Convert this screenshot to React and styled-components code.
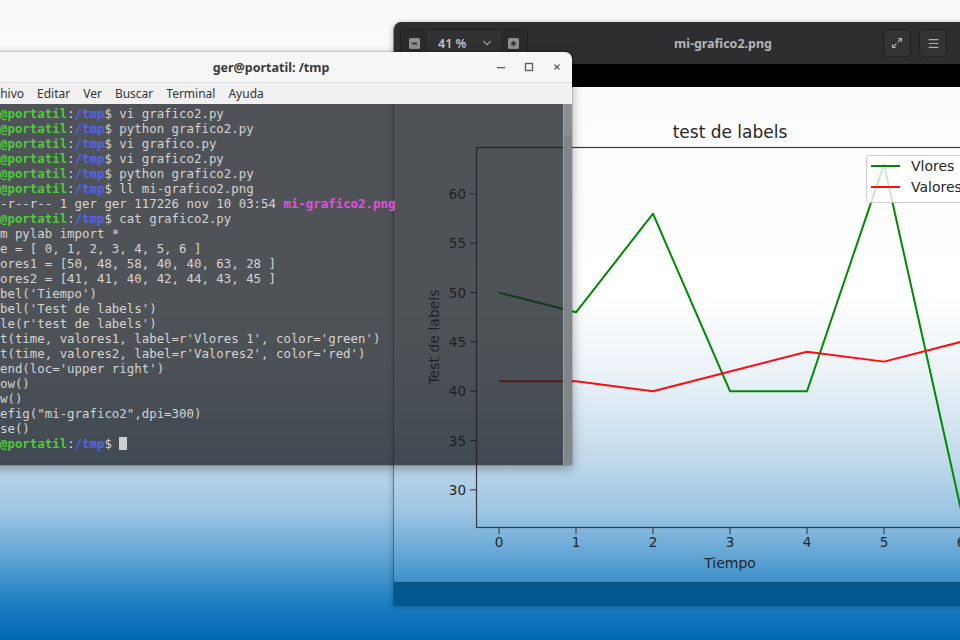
import React from 'react'
import styled, { createGlobalStyle } from 'styled-components'
import { ChevronDown, Maximize2, Menu } from 'lucide-react'

const GlobalStyle = createGlobalStyle`
  html, body {
    margin: 0;
    padding: 0;
  }
  body {
    width: 960px;
    height: 640px;
    overflow: hidden;
    font-family: "Noto Sans", "DejaVu Sans", sans-serif;
  }
`

const Desktop = styled.div`
  position: relative;
  width: 960px;
  height: 640px;
  overflow: hidden;
  background: linear-gradient(
    to bottom,
    #fafafa 0%,
    #ffffff 46%,
    #e9f2f8 59%,
    #c4dbec 71%,
    #9cc5e3 80%,
    #5ca2d3 87.5%,
    #1f7fc2 94%,
    #0068b3 100%
  );
`

/* ---------- image viewer window ---------- */

const Viewer = styled.div`
  position: absolute;
  left: 393px;
  top: 22px;
  width: 658px;
  height: 584px;
  display: flex;
  flex-direction: column;
  border-left: 1px solid rgba(30, 50, 70, 0.55);
  border-radius: 8px 8px 0 0;
  overflow: hidden;
  box-shadow: 0 1px 6px rgba(0, 0, 0, 0.25);
`

const ViewerHeader = styled.header`
  height: 42px;
  flex-shrink: 0;
  background: #2c2e30;
  display: grid;
  grid-template-columns: 1fr auto 1fr;
  align-items: center;
  padding: 0 6px;
  box-sizing: border-box;
`

const ZoomGroup = styled.div`
  justify-self: start;
  display: flex;
  align-items: center;
  height: 26px;
  border: 1px solid #1f2022;
  border-radius: 4px;
  background: #2f3133;
  overflow: hidden;
`

const ZoomButton = styled.div`
  width: 26px;
  height: 26px;
  display: flex;
  align-items: center;
  justify-content: center;
  background: #292b2d;
`

const ZoomValue = styled.div`
  display: flex;
  align-items: center;
  gap: 13px;
  padding: 0 7px 0 11px;
  color: #c4c4c4;
  font-size: 12.5px;
  font-weight: 600;

  svg {
    color: #9a9a9a;
  }
`

const ViewerTitle = styled.div`
  color: #b4b4b4;
  font-size: 12.5px;
  font-weight: 700;
`

const HeaderTools = styled.div`
  justify-self: start;
  display: flex;
  gap: 8px;
  padding-left: 111px;
`

const ToolButton = styled.div`
  width: 26px;
  height: 26px;
  display: flex;
  align-items: center;
  justify-content: center;
  border: 1px solid #1f2022;
  border-radius: 4px;
  background: #313335;
  color: #b0b0b0;
`

const BlackStrip = styled.div`
  height: 23px;
  flex-shrink: 0;
  background: #000;
`

const ViewerCanvas = styled.div`
  height: 495px;
  flex-shrink: 0;
`

const ViewerFooter = styled.div`
  height: 24px;
  flex-shrink: 0;
  background: #00588f;
  border-top: 1px solid #0a4f7c;
`

/* ---------- terminal window ---------- */

const Terminal = styled.div`
  position: absolute;
  left: -30px;
  top: 52px;
  width: 602px;
  height: 413px;
  display: flex;
  flex-direction: column;
  border-radius: 7px 7px 0 0;
  overflow: hidden;
  box-shadow: 0 3px 12px rgba(0, 0, 0, 0.35), 0 0 0 1px rgba(0, 0, 0, 0.12);
`

const TitleBar = styled.div`
  position: relative;
  height: 31px;
  flex-shrink: 0;
  display: flex;
  align-items: center;
  justify-content: center;
  background: #f6f6f6;
  border-bottom: 1px solid #dedede;
  box-sizing: border-box;
  color: #3c3c3c;
  font-size: 12.5px;
  font-weight: 700;
`

const WindowButtons = styled.div`
  position: absolute;
  right: 1px;
  top: 0;
  bottom: 0;
  display: flex;
  align-items: center;
`

const WindowButton = styled.div`
  width: 28px;
  display: flex;
  justify-content: center;
  color: #5b5b5b;
`

const MenuBar = styled.nav`
  height: 21px;
  flex-shrink: 0;
  display: flex;
  align-items: center;
  gap: 13px;
  padding-left: 12px;
  background: #f1f1f1;
  color: #333;
  font-size: 12px;
`

const TermBody = styled.div`
  flex: 1;
  display: flex;
  min-height: 0;
  background: rgba(26, 31, 36, 0.77);
`

const TermText = styled.pre`
  flex: 1;
  margin: 0;
  padding: 2px 0 0 7.6px;
  overflow: hidden;
  font-family: "DejaVu Sans Mono", "Liberation Mono", monospace;
  font-size: 12.4px;
  line-height: 15px;
  color: #d4d4d4;
`

const Host = styled.span`
  color: #4ecb3c;
  font-weight: 700;
`

const Dir = styled.span`
  color: #5463f0;
  font-weight: 700;
`

const Exec = styled.span`
  color: #e34fe0;
  font-weight: 700;
`

const Cursor = styled.span`
  display: inline-block;
  width: 8px;
  height: 13px;
  vertical-align: -2px;
  background: #cfcfcf;
`

const ScrollTrack = styled.div`
  width: 9px;
  flex-shrink: 0;
  display: flex;
  justify-content: center;
  padding: 31px 0 5px;
  box-sizing: border-box;
  background: rgba(215, 218, 220, 0.45);
  border-left: 1px solid rgba(255, 255, 255, 0.18);
`

const ScrollThumb = styled.div`
  flex: 1;
  width: 5px;
  border-radius: 3px;
  background: #7f8589;
`

/* ---------- data ---------- */

const prompts = [
  'vi grafico2.py',
  'python grafico2.py',
  'vi grafico.py',
  'vi grafico2.py',
  'python grafico2.py',
  'll mi-grafico2.png',
]

const source = [
  'from pylab import *',
  'time = [ 0, 1, 2, 3, 4, 5, 6 ]',
  'valores1 = [50, 48, 58, 40, 40, 63, 28 ]',
  'valores2 = [41, 41, 40, 42, 44, 43, 45 ]',
  "xlabel('Tiempo')",
  "ylabel('Test de labels')",
  "title(r'test de labels')",
  "plot(time, valores1, label=r'Vlores 1', color='green')",
  "plot(time, valores2, label=r'Valores2', color='red')",
  "legend(loc='upper right')",
  '#show()',
  'draw()',
  'savefig("mi-grafico2",dpi=300)',
  'close()',
]

const valores1 = [50, 48, 58, 40, 40, 63, 28]
const valores2 = [41, 41, 40, 42, 44, 43, 45]

const px = i => 499 + 77 * i
const py = v => 194 + (60 - v) * 9.86

function Prompt({ children }) {
  return (
    <>
      <Host>ger@portatil</Host>:<Dir>/tmp</Dir>$ {children}
    </>
  )
}

function SquareIcon({ plus }) {
  return (
    <svg width="11" height="11" viewBox="0 0 11 11">
      <rect x="0" y="0" width="11" height="11" rx="1.5" fill="#8e8e8e" />
      <rect x="3" y="4.6" width="5" height="1.8" fill="#2c2e30" />
      {plus && <rect x="4.6" y="3" width="1.8" height="5" fill="#2c2e30" />}
    </svg>
  )
}

function Chart() {
  const ticksY = [30, 35, 40, 45, 50, 55, 60]
  const ticksX = [0, 1, 2, 3, 4, 5, 6]
  const line = vals => vals.map((v, i) => `${px(i)},${py(v)}`).join(' ')
  return (
    <svg width="657" height="495" viewBox="394 87 657 495" fontFamily="DejaVu Sans, sans-serif" fill="#262626">
      <text x="730" y="138" fontSize="17" textAnchor="middle">test de labels</text>
      <rect x="476.5" y="147.5" width="507" height="380" fill="none" stroke="#3a3a3a" strokeWidth="1.2" />
      {ticksY.map(v => (
        <g key={v}>
          <line x1="470" x2="476" y1={py(v)} y2={py(v)} stroke="#3a3a3a" strokeWidth="1.1" />
          <text x="466" y={py(v) + 5} fontSize="13.5" textAnchor="end">{v}</text>
        </g>
      ))}
      {ticksX.map(i => (
        <g key={i}>
          <line x1={px(i)} x2={px(i)} y1="528" y2="534" stroke="#3a3a3a" strokeWidth="1.1" />
          <text x={px(i)} y="547" fontSize="13.5" textAnchor="middle">{i}</text>
        </g>
      ))}
      <text x="730" y="568" fontSize="14" textAnchor="middle">Tiempo</text>
      <text x="434" y="337" fontSize="14" textAnchor="middle" dominantBaseline="central" transform="rotate(-90 434 337)">
        Test de labels
      </text>
      <polyline points={line(valores1)} fill="none" stroke="#008a00" strokeWidth="2" strokeLinejoin="round" />
      <polyline points={line(valores2)} fill="none" stroke="#ff0d0d" strokeWidth="2" strokeLinejoin="round" />
      <rect x="866.5" y="155.5" width="111" height="47" rx="3" fill="rgba(255,255,255,0.8)" stroke="#cccccc" />
      <line x1="871" x2="900" y1="166" y2="166" stroke="#008a00" strokeWidth="2" />
      <line x1="871" x2="900" y1="187" y2="187" stroke="#ff0d0d" strokeWidth="2" />
      <text x="911" y="171" fontSize="14">Vlores 1</text>
      <text x="911" y="192" fontSize="14">Valores2</text>
    </svg>
  )
}

export default function App() {
  return (
    <Desktop>
      <GlobalStyle />

      <Viewer>
        <ViewerHeader>
          <ZoomGroup>
            <ZoomButton><SquareIcon /></ZoomButton>
            <ZoomValue>
              41 %
              <ChevronDown size={14} strokeWidth={2} />
            </ZoomValue>
            <ZoomButton><SquareIcon plus /></ZoomButton>
          </ZoomGroup>
          <ViewerTitle>mi-grafico2.png</ViewerTitle>
          <HeaderTools>
            <ToolButton><Maximize2 size={12} strokeWidth={2.2} /></ToolButton>
            <ToolButton><Menu size={13} strokeWidth={2.2} /></ToolButton>
          </HeaderTools>
        </ViewerHeader>
        <BlackStrip />
        <ViewerCanvas>
          <Chart />
        </ViewerCanvas>
        <ViewerFooter />
      </Viewer>

      <Terminal>
        <TitleBar>
          ger@portatil: /tmp
          <WindowButtons>
            <WindowButton>
              <svg width="10" height="10" viewBox="0 0 10 10"><rect x="1" y="5" width="8" height="1.3" fill="currentColor" /></svg>
            </WindowButton>
            <WindowButton>
              <svg width="10" height="10" viewBox="0 0 10 10"><rect x="1.5" y="1.5" width="7" height="7" fill="none" stroke="currentColor" strokeWidth="1.3" /></svg>
            </WindowButton>
            <WindowButton>
              <svg width="10" height="10" viewBox="0 0 10 10"><path d="M2.5 2.5l5 5M7.5 2.5l-5 5" stroke="currentColor" strokeWidth="1.2" /></svg>
            </WindowButton>
          </WindowButtons>
        </TitleBar>
        <MenuBar>
          <span>Archivo</span>
          <span>Editar</span>
          <span>Ver</span>
          <span>Buscar</span>
          <span>Terminal</span>
          <span>Ayuda</span>
        </MenuBar>
        <TermBody>
          <TermText>
            {prompts.map((cmd, i) => (
              <div key={i}><Prompt>{cmd}</Prompt></div>
            ))}
            <div>-rw-r--r-- 1 ger ger 117226 nov 10 03:54 <Exec>mi-grafico2.png</Exec></div>
            <div><Prompt>cat grafico2.py</Prompt></div>
            {source.map((l, i) => (
              <div key={i}>{l}</div>
            ))}
            <div><Prompt><Cursor /></Prompt></div>
          </TermText>
          <ScrollTrack>
            <ScrollThumb />
          </ScrollTrack>
        </TermBody>
      </Terminal>
    </Desktop>
  )
}
